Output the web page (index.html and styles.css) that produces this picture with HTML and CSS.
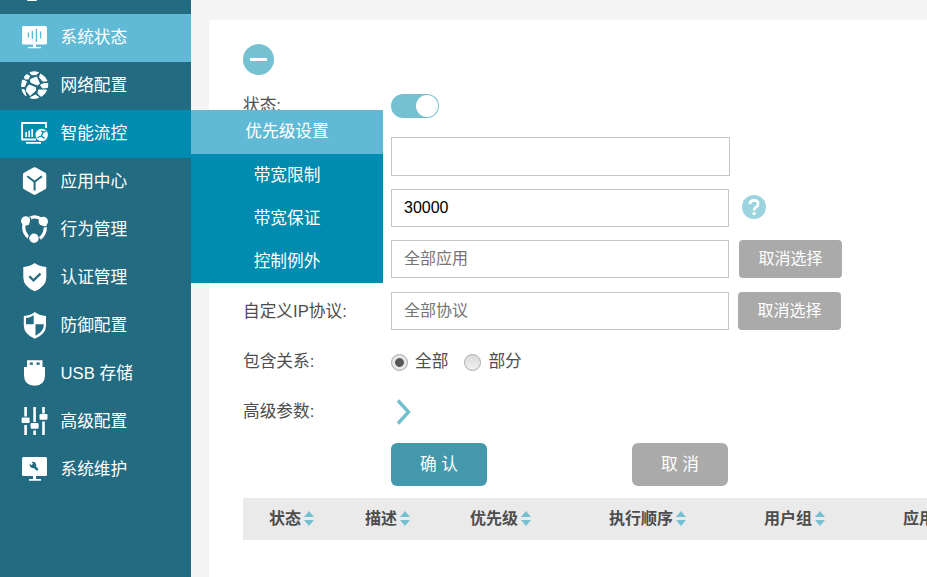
FILE: index.html
```html
<!DOCTYPE html>
<html lang="zh-CN">
<head>
<meta charset="utf-8">
<title>优先级设置</title>
<link rel="stylesheet" href="styles.css">
</head>
<body>
<div class="app">
  <nav class="sidebar">
    <div class="nav-stub"><span></span></div>
    <a class="nav-item current">
      <svg class="nav-icon" viewBox="0 0 30 30"><rect x="2" y="3" width="25" height="18.6" rx="1.5"/><path d="M13 21h3v3h5v1.3H8V24h5z"/><path class="cut" stroke-width="1.4" d="M8.4 9.5v5M12.4 8v8M16.4 6v13M20.6 8.5v7"/></svg>
      <span>系统状态</span></a>
    <a class="nav-item">
      <svg class="nav-icon" viewBox="0 0 30 30"><path stroke="#fff" stroke-width="1" stroke-linejoin="round" d="M4.500 5.500L7 3.500 9.500 5 8.500 8 5 8zM10 1.500Q14 0 18.500 1.500L16.500 3.500 11.500 3.800zM20.500 3Q25.500 5.500 27 10L22.500 10 19.500 6zM10.500 8.500L16.500 6 19.500 12.500 17.500 14 11 11.500zM2.500 9L6.500 10.500 4.500 15.500 1.500 15.500zM2 18.500L4.500 19 6 25Q3 22.500 2 18.500zM9 14L15.500 16.500 15.500 19.500 10 24.500 6.500 20 7 16.500zM20.500 14L24 12.500 27.800 12.500 27.500 16.500 22.500 17zM18.500 19L26.500 19Q25 23.500 21 25.500L18 22.500zM15.500 24L19 26.500Q14 28.300 10 26.800z"/></svg>
      <span>网络配置</span></a>
    <a class="nav-item active">
      <svg class="nav-icon" viewBox="0 0 30 30"><path fill="none" stroke="#fff" stroke-width="1.800" d="M26 9V4H2.100v16.500H16"/><path fill="none" stroke="#fff" stroke-width="1.700" d="M6.200 13v5M9.200 11.500V18M12.200 10v8M6 23.800h15"/><circle cx="21.700" cy="16" r="7" class="hole"/><circle cx="21.700" cy="16" r="6.200"/><path class="cut" stroke-width="1.300" d="M17.500 18.500l4-1.500 1.500-3.500 3-1.500M21.500 17l3 2.500M23 13.500l-1.500-2"/></svg>
      <span>智能流控</span></a>
    <a class="nav-item">
      <svg class="nav-icon" viewBox="0 0 30 30"><path d="M13.400 .6q1.200-.6 2.400 0l9.400 5.200q1.100.6 1.100 1.900v12.600q0 1.300-1.100 1.900l-9.400 5.200q-1.200.6-2.400 0L4 22.200q-1.100-.6-1.100-1.900V7.700q0-1.300 1.100-1.900z"/><path class="cut" stroke-width="2" d="M7.300 9.300l7.300 5.500 7.300-5.500M14.600 14.800v8.600"/></svg>
      <span>应用中心</span></a>
    <a class="nav-item">
      <svg class="nav-icon" viewBox="0 0 30 30"><path fill="none" stroke="#fff" stroke-width="3.200" d="M9.500 3.500q6-3.500 12 1M25 10q1.500 8-5 13.500M9.500 23Q2.500 18 4 9.500"/><circle cx="5.700" cy="6" r="4.700"/><circle cx="23.300" cy="6.500" r="4.700"/><circle cx="14" cy="23.200" r="4.700"/><path class="cut" stroke-width="1.200" d="M9.800 2.200q2 3-.2 6.500M27.500 11.200q-4 1.500-6.800-.8M8.300 24.800q0-4.500 3.500-6.600"/></svg>
      <span>行为管理</span></a>
    <a class="nav-item">
      <svg class="nav-icon" viewBox="0 0 30 30"><path d="M14.700 0Q19 3.300 26.300 4v10.500q0 9-11.600 13.700Q3.300 23.500 3.300 14.500V4Q10.500 3.300 14.700 0z"/><path class="cut" stroke-width="2.300" d="M9.300 13.200l4.200 4.100 7-6.700"/></svg>
      <span>认证管理</span></a>
    <a class="nav-item">
      <svg class="nav-icon" viewBox="0 0 30 30"><path d="M14.800 .9Q19 4.300 26 5v9.500q0 8.600-11.200 13.300Q3.800 23 3.800 14.500V5Q11 4.300 14.800.9z"/><path class="hole" d="M13.700 4.200v9H6V7q4-.4 7.700-2.800zM15.500 13.200h8.300q.4 6.800-8.300 11.500z"/></svg>
      <span>防御配置</span></a>
    <a class="nav-item">
      <svg class="nav-icon" viewBox="0 0 30 30"><path d="M7 1.300h15.500V8H25v8.200q0 9.900-10.300 10.600Q4 26.100 4 16.200V8h3z"/><path class="hole" d="M9.700 3.500h3.200v2.300H9.700zM16.500 3.500h3.200v2.300h-3.200z"/></svg>
      <span>USB 存储</span></a>
    <a class="nav-item">
      <svg class="nav-icon" viewBox="0 0 30 30"><path d="M4.300 0h2.600v9.500H4.300zM4.300 18h2.600v10H4.300zM13.300 0h2.600v15h-2.600zM13.300 23.500h2.600V28h-2.600zM22.200 0h2.600v6.500h-2.600zM22.200 14.500h2.600V28h-2.600z"/><rect x="1.600" y="10.500" width="8" height="5.600" rx="1.200"/><rect x="10.600" y="16" width="8" height="5.700" rx="1.200"/><rect x="19.500" y="7" width="8" height="5.700" rx="1.200"/></svg>
      <span>高级配置</span></a>
    <a class="nav-item">
      <svg class="nav-icon" viewBox="0 0 30 30"><rect x="2" y="2" width="25" height="19" rx="1.500"/><path d="M13 20h3v4h5v1.800H9V24h4z"/><path class="hole" d="M9.500 8.500l2 1.800 1.500-1.500-1.500-1.900q4-.6 4.800 3.200l-.2 1.400 2.500 2.700-1.500 1.700-2.900-2.700q-4.700.2-4.700-4.700z"/></svg>
      <span>系统维护</span></a>
    <div class="submenu">
      <a class="selected">优先级设置</a>
      <a>带宽限制</a>
      <a>带宽保证</a>
      <a>控制例外</a>
    </div>
  </nav>
  <main class="panel">
    <button class="collapse" type="button"><span></span></button>
    <div class="row row-state"><span>状态:</span><div class="field"><span class="switch"></span></div></div>
    <div class="row row-desc"><span></span><div class="field"><input class="wide" type="text"></div></div>
    <div class="row row-priority"><span></span><div class="field"><input type="text" value="30000">
      <svg class="help" viewBox="0 0 24 24"><circle cx="12" cy="12" r="12" fill="#9bd3df"/><path fill="none" stroke="#fff" stroke-width="2.700" d="M7.800 9.200q.2-3.800 4.300-3.800 4 0 4 3.500 0 2-2.200 3.300-1.800 1.100-1.800 3.300"/><circle cx="12.100" cy="18.600" r="1.700" fill="#fff"/></svg></div></div>
    <div class="row row-app"><span></span><div class="field"><input type="text" placeholder="全部应用"><button class="clear" type="button">取消选择</button></div></div>
    <div class="row row-proto"><span>自定义IP协议:</span><div class="field"><input type="text" placeholder="全部协议"><button class="clear near" type="button">取消选择</button></div></div>
    <div class="row row-relation"><span>包含关系:</span><div class="field"><i class="radio checked"></i><span class="option">全部</span><i class="radio"></i><span class="option">部分</span></div></div>
    <div class="row row-advanced"><span>高级参数:</span><div class="field"><svg class="chevron" viewBox="0 0 16 28"><path fill="none" stroke="#72c0ce" stroke-width="3.400" d="M2 2.500l10.500 11.500L2 25.500"/></svg></div></div>
    <div class="actions"><button class="confirm" type="button">确 认</button><button class="cancel" type="button">取 消</button></div>
    <div class="table-head">
      <span class="c-state">状态<i class="sort"></i></span><span class="c-desc">描述<i class="sort"></i></span><span class="c-priority">优先级<i class="sort"></i></span><span class="c-order">执行顺序<i class="sort"></i></span><span class="c-group">用户组<i class="sort"></i></span><span>应用</span>
    </div>
  </main>
</div>
</body>
</html>
```
FILE: styles.css
```css
* { box-sizing: border-box; }
body {
  margin: 0;
  overflow: hidden;
  background: #f4f4f4;
  color: #4d4d4d;
  font: 16.7px/24px "Liberation Sans", "Noto Sans CJK SC", sans-serif;
}
button, input { font: inherit; }
button { border: 0; padding: 0; color: #fff; }
.app { display: flex; height: 577px; }

.sidebar {
  position: relative;
  z-index: 1;
  flex: none;
  width: 191px;
  background: #236b81;
}
.nav-stub { height: 14px; padding-left: 27px; }
.nav-stub span {
  display: block;
  width: 10px;
  height: 1px;
  background: #fff;
  border-radius: 0 0 2px 2px;
}
.nav-item {
  --back: #236b81;
  display: flex;
  align-items: center;
  gap: 10.5px;
  height: 48px;
  padding-left: 20px;
  background: var(--back);
  color: #fff;
}
.nav-item.current { --back: #60bad6; }
.nav-item.active { --back: #008bb0; }
.nav-icon { flex: none; width: 30px; height: 30px; fill: #fff; }
.nav-icon .cut { fill: none; stroke: var(--back); }
.nav-icon .hole { fill: var(--back); }

.submenu {
  position: absolute;
  top: 110px;
  left: 191px;
  width: 192px;
  background: #008bb0;
  color: #fff;
  text-align: center;
}
.submenu a { display: block; height: 43px; line-height: 44px; }
.submenu .selected { height: 44px; background: #60bad6; }

.panel {
  flex: 1;
  min-width: 0;
  margin: 20px 0 0 18px;
  padding: 24px 0 0 34px;
  overflow: hidden;
  background: #fff;
}
.collapse {
  display: flex;
  align-items: center;
  justify-content: center;
  width: 31px;
  height: 31px;
  margin-bottom: 5px;
  border-radius: 50%;
  background: #76c1d1;
}
.collapse span { width: 17px; height: 3px; background: #fff; }
.row {
  display: grid;
  grid-template-columns: 148px 1fr;
  align-items: center;
}
.row-state, .row-desc { height: 51px; }
.row-priority { height: 52px; }
.row-app { height: 50px; }
.row-proto { height: 54px; }
.row-relation { height: 48px; }
.row-advanced { height: 50px; margin-bottom: 7px; }
.row-proto > span, .row-advanced > span { padding-top: 2px; }
.field { display: flex; align-items: center; }
.switch {
  width: 48px;
  height: 24px;
  padding: 1px;
  border-radius: 12px;
  background: #76c1d1;
}
.switch::after {
  content: "";
  display: block;
  width: 22px;
  height: 22px;
  margin-left: auto;
  border-radius: 50%;
  background: #fff;
}
input {
  width: 338px;
  height: 38px;
  padding: 0 12px;
  border: 1px solid #c5c5c5;
  background: #fff;
  color: #000;
  font-size: 16px;
}
input::placeholder { color: #757575; }
.wide { width: 339px; height: 39px; }
.help { width: 24px; height: 24px; margin: 0 0 2px 13px; }
.clear {
  width: 103px;
  height: 38px;
  margin-left: 10px;
  border-radius: 4px;
  background: #aaa;
  font-size: 16px;
}
.clear.near { margin-left: 9px; }
.radio {
  width: 17px;
  height: 17px;
  border: 1px solid #a9a9a9;
  border-radius: 50%;
  background: linear-gradient(#dcdcdc, #eee);
}
.radio.checked { background: radial-gradient(circle, #575757 0 4px, #e6e6e6 4.700px); }
.option { margin: 0 16px 0 7px; }
.chevron { width: 16px; height: 28px; margin: 2px 0 0 5px; }
.actions {
  display: flex;
  gap: 145px;
  margin-bottom: 12px;
  padding-left: 148px;
}
.actions button { width: 96px; height: 43px; border-radius: 6px; }
.confirm { background: #4498ab; }
.cancel { background: #aaa; }
.table-head {
  display: flex;
  height: 42px;
  padding-left: 26px;
  background: #eaeaea;
  font-size: 16px;
  font-weight: bold;
  line-height: 24px;
  white-space: nowrap;
}
.table-head span { display: flex; flex: none; align-items: center; }
.c-state { width: 96px; }
.c-desc { width: 105px; }
.c-priority { width: 139px; }
.c-order { width: 155px; }
.c-group { width: 139px; }
.sort {
  display: flex;
  flex-direction: column;
  gap: 3px;
  margin: 0 0 2px 3px;
}
.sort::before, .sort::after {
  content: "";
  border: 5px solid transparent;
}
.sort::before { border-top: 0; border-bottom: 6px solid #76c1d1; }
.sort::after { border-bottom: 0; border-top: 6px solid #76c1d1; }
```
